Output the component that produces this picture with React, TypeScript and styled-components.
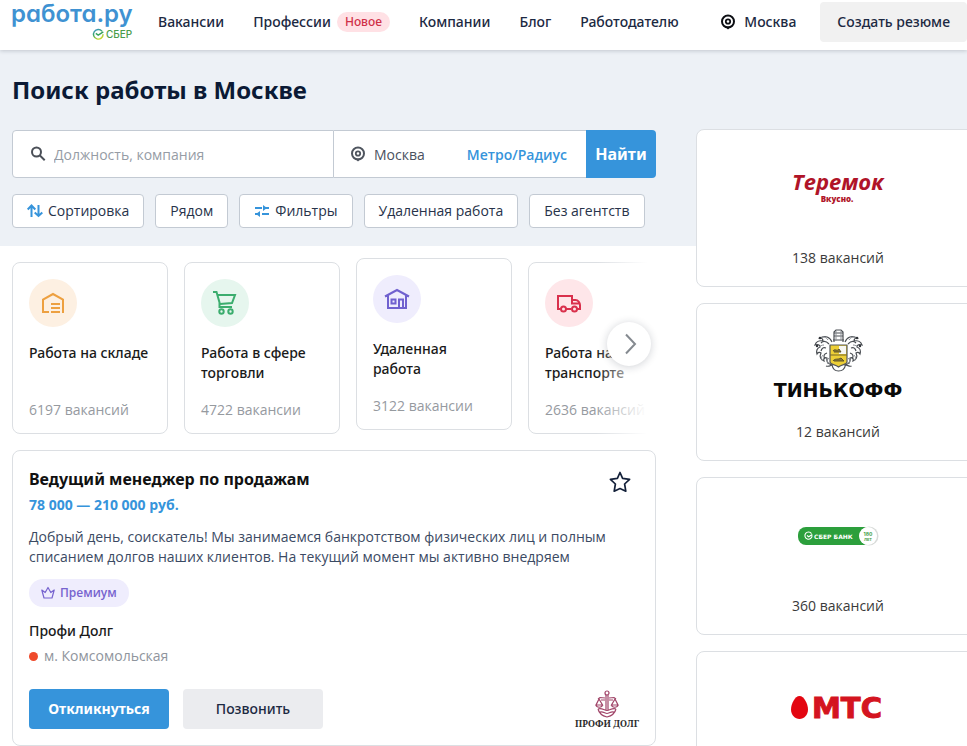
import React from "react";
import styled, { createGlobalStyle, css } from "styled-components";

const accentFont = `"Noto Sans", "Open Sans", sans-serif`;

const GlobalStyle = createGlobalStyle`
  *, *::before, *::after { box-sizing: border-box; }
  body {
    margin: 0;
    background: #ffffff;
    color: #0b1a35;
    font-family: "Open Sans", "Noto Sans", sans-serif;
    font-size: 14px;
    line-height: 20px;
  }
  h1, h2, h3, p, ul { margin: 0; padding: 0; }
  ul { list-style: none; }
  a { color: inherit; text-decoration: none; }
  button, input { font: inherit; color: inherit; }
  svg { display: block; flex-shrink: 0; overflow: visible; }
`;

const Page = styled.div`
  height: 100vh;
  overflow: hidden;
`;

const Header = styled.header`
  position: relative;
  z-index: 3;
  display: flex;
  align-items: center;
  padding: 2px 0 8px 12px;
  background: #ffffff;
  box-shadow: 0 1px 4px rgba(20, 30, 50, 0.2);
  color: #1c2942;
  font-family: ${accentFont};
  font-weight: 500;
`;

const LogoLink = styled.a`
  margin-right: 22px;
`;

const Nav = styled.nav`
  flex: 1;
  display: flex;
  align-items: center;
  gap: 29px;
`;

const NavLink = styled.a`
  display: flex;
  align-items: center;
  gap: 6px;
  white-space: nowrap;
`;

const NewBadge = styled.span`
  padding: 0 8px;
  border-radius: 10px;
  background: #ffe1e5;
  color: #cf3048;
  font-size: 12px;
  line-height: 20px;
`;

const CityLink = styled.a`
  display: flex;
  align-items: center;
  gap: 8px;
  margin-right: 24px;
`;

const ResumeButton = styled.button`
  height: 40px;
  padding: 0 17px;
  border: 0;
  border-radius: 4px;
  background: #f1f1f1;
  white-space: nowrap;
`;

const Layout = styled.div`
  display: grid;
  grid-template-columns: minmax(696px, 1fr) 284px;
  grid-template-rows: auto 1fr;
`;

const HeroBand = styled.section`
  grid-column: 1 / -1;
  grid-row: 1;
  display: grid;
  grid-template-columns: subgrid;
  background: #edf1f6;
`;

const HeroContent = styled.div`
  padding: 24px 40px 18px 12px;
`;

const Title = styled.h1`
  font-family: ${accentFont};
  font-size: 24px;
  line-height: 32px;
  font-weight: 700;
`;

const SearchForm = styled.form`
  display: flex;
  height: 48px;
  margin-top: 24px;
`;

const SearchField = styled.label`
  flex: 1;
  display: flex;
  align-items: center;
  gap: 8px;
  padding: 0 17px;
  border: 1px solid #c3cad3;
  border-radius: 4px 0 0 4px;
  background: #ffffff;
`;

const SearchInput = styled.input`
  flex: 1;
  min-width: 0;
  padding: 2px 0 0;
  border: 0;
  outline: 0;
  background: transparent;
  &::placeholder { color: #969ca5; opacity: 1; }
`;

const PlaceField = styled.div`
  display: flex;
  align-items: center;
  width: 252px;
  padding: 0 19px 0 16px;
  border: solid #c3cad3;
  border-width: 1px 0;
  background: #ffffff;
`;

const PlaceInput = styled.input`
  flex: 1;
  min-width: 0;
  padding: 2px 0 0;
  margin-left: 8px;
  border: 0;
  outline: 0;
  background: transparent;
  color: #4a5160;
`;

const MetroButton = styled.button`
  padding: 2px 0 0;
  border: 0;
  background: transparent;
  color: #3694db;
  font-weight: 600;
`;

const FindButton = styled.button`
  width: 70px;
  padding: 0;
  border: 0;
  border-radius: 0 4px 4px 0;
  background: #3694db;
  color: #ffffff;
  font-family: ${accentFont};
  font-size: 16px;
  font-weight: 700;
`;

const Filters = styled.div`
  display: flex;
  gap: 11px;
  margin-top: 16px;
`;

const FilterButton = styled.button`
  display: flex;
  align-items: center;
  gap: 5px;
  height: 34px;
  padding: 0 14px;
  border: 1px solid #c3cad3;
  border-radius: 4px;
  background: #ffffff;
  color: #27334a;
  white-space: nowrap;
`;

const Main = styled.main`
  grid-column: 1;
  grid-row: 2;
  min-width: 0;
  padding: 16px 40px 16px 12px;
`;

const Carousel = styled.div`
  position: relative;
`;

const CategoryList = styled.ul`
  display: flex;
  gap: 16px;
  margin: -16px 0 0;
  padding: 16px 0;
  overflow: hidden;
`;

const CategoryCard = styled.li<{ $raised?: boolean }>`
  flex: 0 0 156px;
  height: 172px;
  padding: 16px 0 13px 16px;
  border: 1px solid #dcdfe3;
  border-radius: 8px;
  background: #ffffff;
  ${(p) => p.$raised && css`transform: translateY(-4px);`}
`;

const CategoryLink = styled.a`
  display: flex;
  flex-direction: column;
  height: 100%;
`;

const CategoryIcon = styled.span<{ $tint: string }>`
  display: flex;
  align-items: center;
  justify-content: center;
  width: 48px;
  height: 48px;
  border-radius: 50%;
  background: ${(p) => p.$tint};
`;

const CategoryName = styled.h3`
  flex: 1;
  margin-top: 16px;
  max-width: 124px;
  color: #1a1a1a;
  font-family: ${accentFont};
  font-size: 14px;
  line-height: 20px;
  font-weight: 500;
`;

const CategoryCount = styled.span`
  color: #969a9f;
  white-space: nowrap;
`;

const Fade = styled.div`
  position: absolute;
  top: 0;
  right: 0;
  bottom: 0;
  width: 60px;
  background: linear-gradient(to right, rgba(255, 255, 255, 0), #ffffff 85%);
  pointer-events: none;
`;

const NextButton = styled.button`
  position: absolute;
  top: 76px;
  right: 5px;
  display: flex;
  align-items: center;
  justify-content: center;
  width: 44px;
  height: 44px;
  padding: 0;
  border: 0;
  border-radius: 50%;
  background: #ffffff;
  box-shadow: 0 1px 8px rgba(20, 30, 50, 0.2);
`;

const Vacancy = styled.article`
  padding: 16px;
  border: 1px solid #dcdfe3;
  border-radius: 8px;
  background: #ffffff;
`;

const VacancyHead = styled.div`
  display: flex;
  justify-content: space-between;
  align-items: flex-start;
`;

const VacancyTitle = styled.h2`
  color: #111111;
  font-family: ${accentFont};
  font-size: 16px;
  line-height: 24px;
  font-weight: 700;
`;

const StarButton = styled.button`
  margin: 4px 8px 0 0;
  padding: 0;
  border: 0;
  background: transparent;
`;

const Salary = styled.p`
  color: #3694db;
  font-weight: 700;
  line-height: 24px;
`;

const Description = styled.p`
  margin-top: 10px;
  padding-right: 32px;
  color: #3b4a63;
`;

const Premium = styled.span`
  display: inline-flex;
  align-items: center;
  gap: 5px;
  height: 28px;
  margin-top: 12px;
  padding: 0 12px;
  border-radius: 14px;
  background: #efedfd;
  color: #7764cf;
  font-size: 12px;
  font-weight: 600;
`;

const Company = styled.p`
  margin-top: 14px;
  color: #1a1a1a;
  font-family: ${accentFont};
  font-weight: 500;
`;

const Metro = styled.p`
  display: flex;
  align-items: center;
  gap: 6px;
  margin-top: 5px;
  color: #8f959d;
  &::before {
    content: "";
    width: 9px;
    height: 9px;
    border-radius: 50%;
    background: #ef4a2b;
  }
`;

const Actions = styled.div`
  display: flex;
  align-items: flex-end;
  gap: 14px;
  margin-top: 23px;
`;

const ActionButton = styled.button<{ $primary?: boolean }>`
  width: 140px;
  height: 40px;
  padding: 0;
  border: 0;
  border-radius: 4px;
  background: ${(p) => (p.$primary ? "#3694db" : "#ebecef")};
  color: ${(p) => (p.$primary ? "#ffffff" : "#1c2942")};
  font-family: ${accentFont};
  font-weight: ${(p) => (p.$primary ? 700 : 500)};
`;

const CompanyMark = styled.div`
  display: flex;
  flex-direction: column;
  align-items: center;
  margin-left: auto;
  color: #2c2c2c;
  font-family: "Noto Serif", "Liberation Serif", serif;
  font-size: 9px;
  line-height: 11px;
  font-weight: 700;
`;

const Side = styled.aside`
  grid-column: 2;
  grid-row: 1 / 3;
  display: flex;
  flex-direction: column;
  gap: 16px;
  padding-top: 79px;
`;

const Employer = styled.a`
  display: flex;
  flex-direction: column;
  align-items: center;
  gap: 18px;
  min-height: 158px;
  padding: 16px 16px 18px;
  border: 1px solid #dcdfe3;
  border-radius: 8px;
  background: #ffffff;
  color: #3a3a3a;
`;

const EmployerLogo = styled.span`
  height: 84px;
  display: flex;
  align-items: center;
`;

const RoundWordmark = styled.text`
  font-family: Inter, sans-serif;
  font-size: 24px;
  font-weight: 600;
  font-feature-settings: "cv11" 1;
`;

const RabotaLogo = () => (
  <svg width="124" height="40" viewBox="0 0 124 40" role="img" aria-label="работа.ру">
    <RoundWordmark x="-1" y="20" fill="#3f92d2">работа.ру</RoundWordmark>
    <defs>
      <linearGradient id="sber" x1="0" y1="0" x2="0.5" y2="1">
        <stop offset="0" stopColor="#3b8fd6" />
        <stop offset="0.45" stopColor="#3aa76a" />
        <stop offset="1" stopColor="#c5d62d" />
      </linearGradient>
    </defs>
    <path d="M90 29.200a4.800 4.800 0 1 0 1.100 3" fill="none" stroke="url(#sber)" strokeWidth="1.400" />
    <path d="m83.800 31.400 2.400 1.700 5.100-3.200" fill="none" stroke="#35a05a" strokeWidth="1.400" />
    <text x="94" y="36" fill="#4b9d4a" fontFamily="Inter, sans-serif" fontSize="10" fontWeight="500">СБЕР</text>
  </svg>
);

const PinIcon = ({ color }: { color: string }) => (
  <svg width="16" height="16" viewBox="0 0 16 16" aria-hidden="true">
    <path d="M5 12.500h6l-3 3Z" fill={color} />
    <circle cx="8" cy="7.500" r="6" fill="none" stroke={color} strokeWidth="2" />
    <circle cx="8" cy="7.500" r="2.200" fill="none" stroke={color} strokeWidth="1.800" />
  </svg>
);

const SearchIcon = () => (
  <svg width="16" height="16" viewBox="0 0 16 16" fill="none" stroke="#4b5058" strokeWidth="2" aria-hidden="true">
    <circle cx="6.500" cy="6" r="4.500" />
    <path d="m9.700 9.200 5 5" />
  </svg>
);

const SortIcon = () => (
  <svg width="16" height="14" viewBox="0 0 16 14" fill="none" stroke="#3694db" strokeWidth="2" aria-hidden="true">
    <path d="M4.500 13V2M.700 5.500l3.800-4 3.800 4M11.500 1v11M7.700 8.500l3.800 3.500 3.800-3.500" />
  </svg>
);

const TuneIcon = () => (
  <svg width="16" height="14" viewBox="0 0 16 14" aria-hidden="true">
    <g stroke="#3694db" strokeWidth="2" fill="none">
      <path d="M1 4h7M9 4h6M1 10h4M8 10h7" />
    </g>
    <path d="M9 1v6l4-3ZM6 7v6l-4-3Z" fill="#3694db" />
  </svg>
);

const WarehouseIcon = () => (
  <svg width="24" height="24" viewBox="0 0 24 24" fill="none" stroke="#eda040" strokeWidth="2" aria-hidden="true">
    <path d="M8 21H2V8.500L12 3l10 5.500V22M10 13h9M10 17h9M10 21h9" />
  </svg>
);

const CartIcon = () => (
  <svg width="26" height="26" viewBox="0 0 26 26" fill="none" stroke="#3bad6e" strokeWidth="2" aria-hidden="true">
    <path d="M1 2h3.500l3 10.500v4.500H20M5.500 5H23l-3 8-12 1" />
    <circle cx="9.500" cy="21.500" r="2.200" />
    <circle cx="18.500" cy="21.500" r="2.200" />
  </svg>
);

const HouseIcon = () => (
  <svg width="24" height="24" viewBox="0 0 24 24" fill="none" stroke="#7061cf" strokeWidth="2" aria-hidden="true">
    <path d="M0 9.500 12 3l12 6.500M3 8.500V21h18V8.500M6.500 12.500h4v4h-4zM14 21v-8.500h4V21" />
  </svg>
);

const TruckIcon = () => (
  <svg width="26" height="24" viewBox="0 0 26 24" fill="none" stroke="#d9304c" strokeWidth="2" aria-hidden="true">
    <path d="M4.500 18H2V5h14v4M10 18h5M16 9h3.500c2.500 0 4.500 2.500 4.500 5v4h-3M16 9v3.500h7.500" />
    <circle cx="7.500" cy="18" r="2.500" />
    <circle cx="18.500" cy="18" r="2.500" />
  </svg>
);

const ProfiIcon = () => (
  <svg width="24" height="28" viewBox="0 0 24 28" fill="none" stroke="#a04468" strokeWidth="1.200" aria-hidden="true">
    <circle cx="12" cy="3" r="2" />
    <path d="M11 5v15M13 5v15M10 8 5 7.500 3 9M14 8l5-.500L21 9M10 10H6M14 10h4M4 9l-3 6h6.500ZM20 9l-3.500 6H23ZM1 15c.5 3 6 3 6.500 0M16.500 15c.5 3 6 3 6.500 0M3 19c4-1.500 6 1.500 9 1.500s5-3 9-1.500M5 22c3-1 5 1.500 7 1.500s4-2.500 7-1.500M3 19c1 4 5 7 9 8 4-1 8-4 9-8" />
  </svg>
);

const TeremokLogo = () => (
  <svg width="100" height="36" viewBox="0 0 100 36" role="img" aria-label="Теремок">
    <text x="50" y="20" textAnchor="middle" fill="#b01428" fontFamily="Open Sans, sans-serif" fontSize="22" fontStyle="italic" fontWeight="700">Теремок</text>
    <text x="49" y="32" textAnchor="middle" fill="#b01428" fontFamily="Open Sans, sans-serif" fontSize="8" fontWeight="800">Вкусно.</text>
  </svg>
);

const TinkoffLogo = () => (
  <svg width="132" height="72" viewBox="0 -2 132 72" role="img" aria-label="Тинькофф">
    <g fill="none" stroke="#4b4f54" strokeWidth="1.200">
      <path d="M62 14V4l2-2h5l2 2v10M62 5h9M62 8h9M61 12h11" />
      <path d="M60 14c-2-5-7-7-12-4 2 0 3 1 3 3-4-1-7 1-8 4 3-1 5 0 5 2-3 1-4 4-3 7 1-2 3-2 4-1-2 4 0 7 3 8-1-3 1-4 3-3-1 5 3 7 6 7M73 14c2-5 7-7 12-4-2 0-3 1-3 3 4-1 7 1 8 4-3-1-5 0-5 2 3 1 4 4 3 7-1-2-3-2-4-1 2 4 0 7-3 8 1-3-1-4-3-3 1 5-3 7-6 7" />
      <path d="M57 16c-3-3-6-3-8-1M54 20c-3-1-4 0-5 3M55 25c-3 1-4 3-2 6M76 16c3-3 6-3 8-1M79 20c3-1 4 0 5 3M78 25c3 1 4 3 2 6" />
      <path d="M54 38c3 1 5-1 6-1 1 5 4 6 6.500 6s6-1 7-6c2 0 4 2 6 1" />
    </g>
    <g stroke="#8b8f94" fill="none"><path d="M56 12c-2-3-5-4-7-2M52 17c-2 0-4 1-5 2M51 27c-2 2-2 4 0 6M57 30c-2 1-2 4-1 6M77 12c2-3 5-4 7-2M81 17c2 0 4 1 5 2M82 27c2 2 2 4 0 6M76 30c2 1 2 4 1 6M64 3v10M69 3v10" /></g>
    <g fill="#303338"><circle cx="48" cy="10" r="1.300" /><circle cx="85" cy="10" r="1.300" /><circle cx="45" cy="18" r="1.200" /><circle cx="88" cy="18" r="1.200" /></g>
    <path d="M58 17h17v17c0 3-5 2-8.500 5-3.500-3-8.500-2-8.500-5Z" fill="#edcf36" stroke="#55585a" strokeWidth="1.200" />
    <path d="M67 18h7v8h-7z" fill="#f7f7f2" />
    <path d="M58 27h17" stroke="#77672b" />
    <path d="M61 23c2-3 4 1 6-2l2 3h-7M61 33c2-3 5-1 8-3l3 3H62" fill="#8c7a2e" stroke="#5e5429" />
    <text x="66" y="69" textAnchor="middle" fill="#0a0a0a" fontFamily="DejaVu Sans, sans-serif" fontSize="19" fontWeight="700">ТИНЬКОФФ</text>
  </svg>
);

const SberLogo = () => (
  <svg width="82" height="22" viewBox="0 0 82 22" role="img" aria-label="Сбербанк">
    <rect x="1" y="2" width="76" height="18" rx="8" fill="#2c9f3c" />
    <circle cx="72" cy="11" r="9.500" fill="#d8dbd9" />
    <circle cx="71" cy="11" r="9" fill="#ffffff" />
    <path d="M14.500 8.600a3.600 3.600 0 1 0 .6 2M10 10.500l1.700 1.300 3.600-2.300" fill="none" stroke="#ffffff" strokeWidth="1.100" />
    <text x="17" y="13.500" fill="#ffffff" fontFamily="DejaVu Sans, sans-serif" fontSize="6" fontWeight="700">СБЕР БАНК</text>
    <text x="71" y="11" textAnchor="middle" fill="#43a047" fontFamily="Inter, sans-serif" fontSize="5" fontWeight="700">180</text>
    <text x="71" y="16" textAnchor="middle" fill="#43a047" fontFamily="Inter, sans-serif" fontSize="4" fontWeight="700">ЛЕТ</text>
  </svg>
);

const MtsLogo = () => (
  <svg width="96" height="36" viewBox="0 2 96 36" role="img" aria-label="МТС">
    <path d="M9.500 6C14 6 18 14 18 19.500S14 29 9.500 29 1 25 1 19.500 5 6 9.500 6Z" fill="#e30611" />
    <text x="22" y="28" fill="#d41420" stroke="#d41420" strokeWidth="1" fontFamily="DejaVu Sans, sans-serif" fontSize="29" fontWeight="700">МТС</text>
  </svg>
);

const categories = [
  { name: "Работа на складе", count: "6197 вакансий", tint: "#fdf0e2", Icon: WarehouseIcon },
  { name: "Работа в сфере торговли", count: "4722 вакансии", tint: "#e6f6ee", Icon: CartIcon },
  { name: "Удаленная работа", count: "3122 вакансии", tint: "#efedfd", Icon: HouseIcon, raised: true },
  { name: "Работа на транспорте", count: "2636 вакансий", tint: "#fee6e9", Icon: TruckIcon },
];

const employers = [
  { id: "teremok", count: "138 вакансий", Logo: TeremokLogo },
  { id: "tinkoff", count: "12 вакансий", Logo: TinkoffLogo },
  { id: "sber", count: "360 вакансий", Logo: SberLogo },
  { id: "mts", count: "", Logo: MtsLogo },
];

export default function App() {
  return (
    <Page>
      <GlobalStyle />
      <Header>
        <LogoLink href="#"><RabotaLogo /></LogoLink>
        <Nav>
          <NavLink href="#">Вакансии</NavLink>
          <NavLink href="#">Профессии <NewBadge>Новое</NewBadge></NavLink>
          <NavLink href="#">Компании</NavLink>
          <NavLink href="#">Блог</NavLink>
          <NavLink href="#">Работодателю</NavLink>
        </Nav>
        <CityLink href="#"><PinIcon color="#0d0f14" />Москва</CityLink>
        <ResumeButton type="button">Создать резюме</ResumeButton>
      </Header>
      <Layout>
        <HeroBand>
          <HeroContent>
            <Title>Поиск работы в Москве</Title>
            <SearchForm onSubmit={(e) => e.preventDefault()}>
              <SearchField>
                <SearchIcon />
                <SearchInput type="text" placeholder="Должность, компания" aria-label="Должность, компания" />
              </SearchField>
              <PlaceField>
                <PinIcon color="#4f555f" />
                <PlaceInput type="text" defaultValue="Москва" aria-label="Город" />
                <MetroButton type="button">Метро/Радиус</MetroButton>
              </PlaceField>
              <FindButton type="submit">Найти</FindButton>
            </SearchForm>
            <Filters>
              <FilterButton type="button"><SortIcon />Сортировка</FilterButton>
              <FilterButton type="button">Рядом</FilterButton>
              <FilterButton type="button"><TuneIcon />Фильтры</FilterButton>
              <FilterButton type="button">Удаленная работа</FilterButton>
              <FilterButton type="button">Без агентств</FilterButton>
            </Filters>
          </HeroContent>
        </HeroBand>
        <Main>
          <Carousel>
            <CategoryList>
              {categories.map(({ name, count, tint, Icon, raised }) => (
                <CategoryCard key={name} $raised={raised}>
                  <CategoryLink href="#">
                    <CategoryIcon $tint={tint}><Icon /></CategoryIcon>
                    <CategoryName>{name}</CategoryName>
                    <CategoryCount>{count}</CategoryCount>
                  </CategoryLink>
                </CategoryCard>
              ))}
            </CategoryList>
            <Fade />
            <NextButton type="button" aria-label="Далее">
              <svg width="24" height="24" viewBox="0 0 24 24" fill="none" stroke="#858a90" strokeWidth="2"><path d="m9 2.500 9 9.500-9 9.500" /></svg>
            </NextButton>
          </Carousel>
          <Vacancy>
            <VacancyHead>
              <VacancyTitle>Ведущий менеджер по продажам</VacancyTitle>
              <StarButton type="button" aria-label="В избранное">
                <svg width="22" height="22" viewBox="0 0 22 22" fill="none" stroke="#14213a" strokeWidth="1.700" strokeLinejoin="round"><path d="m11 1.500 2.600 5.900 7 .900-5 4.700 1.200 7.200L11 17.500l-5.800 2.700L6.400 13l-5-4.700 7-.900Z" /></svg>
              </StarButton>
            </VacancyHead>
            <Salary>78 000 — 210 000 руб.</Salary>
            <Description>Добрый день, соискатель! Мы занимаемся банкротством физических лиц и полным списанием долгов наших клиентов. На текущий момент мы активно внедряем</Description>
            <Premium>
              <svg width="14" height="14" viewBox="0 0 14 14" fill="none" stroke="#7764cf" strokeWidth="1.200" strokeLinejoin="round" aria-hidden="true"><path d="M3 12 .800 4l3.400 2.500L7 1.500l2.800 5L13.200 4 11 12Z" /></svg>
              Премиум
            </Premium>
            <Company>Профи Долг</Company>
            <Metro>м. Комсомольская</Metro>
            <Actions>
              <ActionButton type="button" $primary>Откликнуться</ActionButton>
              <ActionButton type="button">Позвонить</ActionButton>
              <CompanyMark><ProfiIcon />ПРОФИ ДОЛГ</CompanyMark>
            </Actions>
          </Vacancy>
        </Main>
        <Side>
          {employers.map(({ id, count, Logo }) => (
            <Employer key={id} href="#">
              <EmployerLogo><Logo /></EmployerLogo>
              {count}
            </Employer>
          ))}
        </Side>
      </Layout>
    </Page>
  );
}
